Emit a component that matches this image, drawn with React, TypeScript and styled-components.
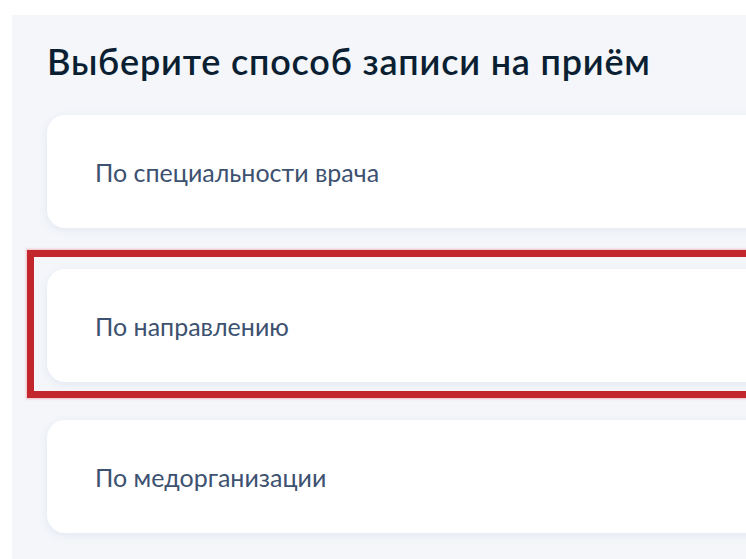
import React from "react";
import styled, { createGlobalStyle } from "styled-components";

const GlobalStyle = createGlobalStyle`
  html, body {
    margin: 0;
    padding: 0;
    background: #ffffff;
    overflow: hidden;
  }
  body {
    font-family: Lato, "Open Sans", "Liberation Sans", sans-serif;
  }
`;

const Page = styled.div`
  width: 100vw;
  height: 100vh;
  padding: 15px 0 0 12px;
  box-sizing: border-box;
  overflow: hidden;
`;

const Panel = styled.div`
  width: calc(100% + 200px);
  height: 100%;
  box-sizing: border-box;
  background: #f4f6fa;
  padding: 25px 0 0 35px;
  display: flex;
  flex-direction: column;
`;

const Title = styled.h1`
  margin: 0 0 33px;
  font-size: 36px;
  line-height: 42px;
  font-weight: 600;
  color: #0b1f33;
  letter-spacing: 0.8px;
`;

const List = styled.div`
  display: flex;
  flex-direction: column;
  gap: 22px;
`;

const Highlight = styled.div`
  margin-left: -20px;
  border: 7px solid #c4262e;
  padding: 12px 0 9px 13px;
  box-shadow: 0 0 2px 1px rgba(240, 120, 130, 0.45);
`;

const Card = styled.button`
  display: flex;
  align-items: center;
  width: 100%;
  height: 113px;
  box-sizing: border-box;
  padding: 0 0 0 48px;
  border: none;
  border-radius: 18px;
  background: #ffffff;
  box-shadow: 0 2px 8px rgba(110, 130, 170, 0.12);
  font-family: Lato, "Open Sans", "Liberation Sans", sans-serif;
  font-size: 25px;
  color: #3d5170;
  text-align: left;
  cursor: pointer;
`;

const options = [
  { id: "spec", label: "По специальности врача" },
  { id: "ref", label: "По направлению", marked: true },
  { id: "org", label: "По медорганизации" },
];

export default function App() {
  return (
    <>
      <GlobalStyle />
      <Page>
        <Panel>
          <Title>Выберите способ записи на приём</Title>
          <List>
            {options.map((o) =>
              o.marked ? (
                <Highlight key={o.id}>
                  <Card>{o.label}</Card>
                </Highlight>
              ) : (
                <Card key={o.id}>{o.label}</Card>
              )
            )}
          </List>
        </Panel>
      </Page>
    </>
  );
}
